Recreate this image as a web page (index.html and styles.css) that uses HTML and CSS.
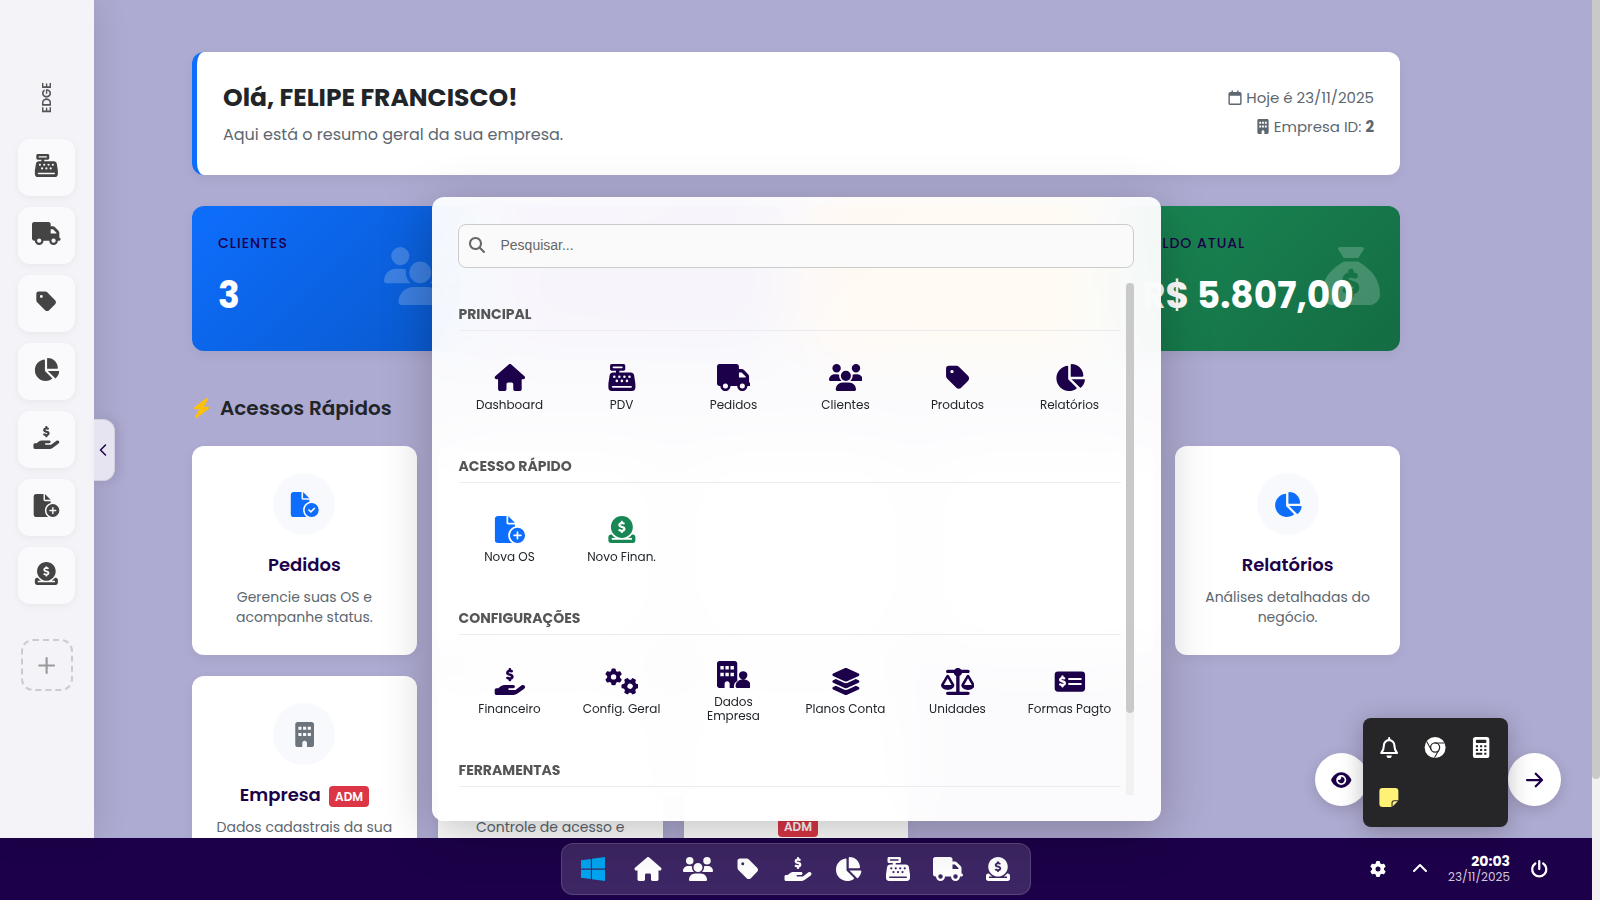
FILE: index.html
```html
<!DOCTYPE html>
<html lang="pt-BR">

<head>
    <meta charset="UTF-8">
    <title>Painel</title>
    <link rel="stylesheet" href="styles.css">
</head>

<body>
    <svg class="sprite" aria-hidden="true">
        <symbol id="i-house" viewBox="0 0 576 512"><path d="M575.8 255.5c0 18-15 32.1-32 32.1h-32l.7 160.2c0 2.7-.2 5.4-.5 8.1V472c0 22.1-17.9 40-40 40H392c-22.1 0-40-17.9-40-40V384c0-17.7-14.3-32-32-32H256c-17.7 0-32 14.3-32 32v88c0 22.1-17.9 40-40 40H104c-22.1 0-40-17.9-40-40V287.6H32c-18 0-32-14-32-32.1c0-9 3-17 10-24L266.4 8c7-7 15-8 22-8s15 2 21 7L564.8 231.5c8 7 12 15 11 24z"/></symbol>
        <symbol id="i-register" viewBox="0 0 512 512"><path d="M64 0C46.3 0 32 14.3 32 32V96c0 17.7 14.3 32 32 32h80v32H87c-31.6 0-58.5 23.1-63.3 54.4L1.1 364.1C.4 368.8 0 373.6 0 378.4V448c0 35.3 28.7 64 64 64H448c35.3 0 64-28.7 64-64V378.4c0-4.8-.4-9.6-1.1-14.4L488.2 214.4C483.5 183.1 456.6 160 425 160H208V128h80c17.7 0 32-14.3 32-32V32c0-17.7-14.3-32-32-32H64zM96 48H256c8.8 0 16 7.2 16 16s-7.2 16-16 16H96c-8.8 0-16-7.2-16-16s7.2-16 16-16zM64 432c0-8.8 7.2-16 16-16H432c8.8 0 16 7.2 16 16s-7.2 16-16 16H80c-8.8 0-16-7.2-16-16zm48-168a24 24 0 1 1 0-48 24 24 0 1 1 0 48zm120-24a24 24 0 1 1 -48 0 24 24 0 1 1 48 0zM160 344a24 24 0 1 1 0-48 24 24 0 1 1 0 48zM328 240a24 24 0 1 1 -48 0 24 24 0 1 1 48 0zM256 344a24 24 0 1 1 0-48 24 24 0 1 1 0 48zM424 240a24 24 0 1 1 -48 0 24 24 0 1 1 48 0zM352 344a24 24 0 1 1 0-48 24 24 0 1 1 0 48z" fill-rule="evenodd"/></symbol>
        <symbol id="i-truck" viewBox="0 0 640 512"><path d="M48 0C21.5 0 0 21.5 0 48V368c0 26.5 21.5 48 48 48H64c0 53 43 96 96 96s96-43 96-96H384c0 53 43 96 96 96s96-43 96-96h32c17.7 0 32-14.3 32-32s-14.3-32-32-32V237.3c0-17-6.7-33.3-18.7-45.3L512 114.7c-12-12-28.3-18.7-45.3-18.7H416V48c0-26.5-21.5-48-48-48H48zM416 160h50.7L544 237.3V256H416V160zM112 416a48 48 0 1 1 96 0 48 48 0 1 1 -96 0zm368-48a48 48 0 1 1 0 96 48 48 0 1 1 0-96z" fill-rule="evenodd"/></symbol>
        <symbol id="i-tag" viewBox="0 0 448 512"><path d="M0 80V229.5c0 17 6.7 33.3 18.7 45.3l176 176c25 25 65.5 25 90.5 0L418.7 317.3c25-25 25-65.5 0-90.5l-176-176c-12-12-28.3-18.7-45.3-18.7H48C21.5 32 0 53.5 0 80zm112 32a32 32 0 1 1 0 64 32 32 0 1 1 0-64z" fill-rule="evenodd"/></symbol>
        <symbol id="i-pie" viewBox="0 0 576 512"><path d="M304 240V16.6c0-9 7-16.6 16-16.6C443.7 0 544 100.3 544 224c0 9-7.6 16-16.6 16H304zM32 272C32 150.7 122.1 50.3 239 34.3c9.2-1.3 17 6.1 17 15.4V288L412.5 444.5c6.7 6.7 6.2 17.7-1.5 23.1C371.8 495.6 323.8 512 272 512C139.5 512 32 404.6 32 272zm526.4 16c9.3 0 16.6 7.8 15.4 17c-7.7 55.9-34.6 105.6-73.9 142.3c-6 5.6-15.4 5.2-21.2-.7L320 288H558.4z"/></symbol>
        <symbol id="i-dollar" viewBox="192 0 192 256"><path d="M312 24V34.5c6.4 1.2 12.6 2.7 18.2 4.2c12.8 3.4 20.4 16.6 17 29.4s-16.6 20.4-29.4 17c-10.9-2.9-21.1-4.9-30.2-5c-7.3-.1-14.7 1.7-19.4 4.4c-2.1 1.3-3.1 2.4-3.5 3c-.3 .5-.7 1.2-.7 2.8c0 .3 0 .5 0 .6c.2 .2 .9 1.2 3.3 2.6c5.8 3.5 14.4 6.2 27.4 10.1l.9 .3c11.1 3.3 25.9 7.8 37.9 15.3c13.7 8.6 26.1 22.9 26.4 44.9c.3 22.5-11.4 38.9-26.7 48.5c-6.7 4.1-13.9 7-21.3 8.8V232c0 13.3-10.7 24-24 24s-24-10.7-24-24V220.6c-9.5-2.3-18.2-5.3-25.6-7.8c-2.1-.7-4.1-1.4-6-2c-12.6-4.2-19.4-17.8-15.2-30.4s17.8-19.4 30.4-15.2c2.6 .9 5 1.7 7.3 2.5c13.6 4.6 23.4 7.9 33.9 8.3c8 .3 15.1-1.6 19.2-4.1c1.9-1.2 2.8-2.2 3.2-2.9c.4-.6 .9-1.8 .8-4.1c0-1 0-2.1-4-4.8c-5.7-3.6-14.3-6.4-27.1-10.3l-1.9-.6c-10.8-3.2-25-7.5-36.4-14.4c-13.5-8.1-26.5-22-26.6-44.1c-.1-22.9 12.9-38.6 27.7-47.4c6.4-3.8 13.3-6.4 20.2-8.2V24c0-13.3 10.7-24 24-24s24 10.7 24 24z"/></symbol>
        <symbol id="i-hand" viewBox="0 0 576 512"><use href="#i-dollar" x="192" y="0" width="192" height="256"/><path d="M559.7 392.2c17.8-13.1 21.6-38.1 8.5-55.9s-38.1-21.6-55.9-8.5L392.6 416H272c-8.8 0-16-7.2-16-16s7.2-16 16-16h80c17.7 0 32-14.3 32-32s-14.3-32-32-32H193.7c-29.1 0-57.3 9.9-80 28L68.8 384H32c-17.7 0-32 14.3-32 32v64c0 17.7 14.3 32 32 32H352.5c29 0 57.3-9.3 80.7-26.5l126.6-93.3z"/></symbol>
        <symbol id="i-file" viewBox="0 0 576 512"><path d="M0 64C0 28.7 28.7 0 64 0H224V128c0 17.7 14.3 32 32 32H384v38.6C310.1 219.5 256 287.4 256 368c0 59.1 29.1 111.3 73.7 143.3c-3.2 .5-6.4 .7-9.7 .7H64c-35.3 0-64-28.7-64-64V64zm384 64H256V0L384 128z"/></symbol>
        <symbol id="i-file-plus" viewBox="0 0 576 512"><use href="#i-file" width="576" height="512"/><path d="M432 224a144 144 0 1 1 0 288 144 144 0 1 1 0-288zm16 80c0-8.8-7.2-16-16-16s-16 7.2-16 16v48H368c-8.8 0-16 7.2-16 16s7.2 16 16 16h48v48c0 8.8 7.2 16 16 16s16-7.2 16-16V384h48c8.8 0 16-7.2 16-16s-7.2-16-16-16H448V304z" fill-rule="evenodd"/></symbol>
        <symbol id="i-file-check" viewBox="0 0 576 512"><use href="#i-file" width="576" height="512"/><path d="M576 368a144 144 0 1 1 -288 0 144 144 0 1 1 288 0zm-76.7-43.3c-6.2-6.2-16.4-6.2-22.6 0L416 385.4l-28.7-28.7c-6.2-6.2-16.4-6.2-22.6 0s-6.2 16.4 0 22.6l40 40c6.2 6.2 16.4 6.2 22.6 0l72-72c6.2-6.2 6.2-16.4 0-22.6z" fill-rule="evenodd"/></symbol>
        <symbol id="i-coin" viewBox="0 0 512 512"><path d="M326.7 403.7c-22.1 8-45.9 12.3-70.7 12.3s-48.7-4.4-70.7-12.3c-30-11-57.6-29-79.4-51.7C70 314.6 48 263.9 48 208C48 93.1 141.1 0 256 0S464 93.1 464 208c0 55.9-22 106.6-57.9 144c-22 22.5-50 41-79.4 51.7zM256 91.9c-11.1 0-20.1 9-20.1 20.1v6c-5.6 1.2-10.9 2.9-15.9 5.1c-15 6.8-27.9 19.4-31.1 37.7c-1.8 10.2-.8 20 3.4 29c4.2 8.8 10.7 15 17.3 19.5c11.6 7.9 26.9 12.5 38.6 16l2.2 .7c13.9 4.2 23.4 7.4 29.3 11.7c2.5 1.8 3.4 3.2 3.7 4c.3 .8 .9 2.6 .2 6.7c-.6 3.5-2.5 6.4-8 8.8c-6.1 2.6-16 3.9-28.8 1.9c-6-1-16.7-4.6-26.2-7.9c-2.2-.7-4.3-1.5-6.4-2.1c-10.5-3.5-21.8 2.2-25.3 12.7s2.2 21.8 12.7 25.3c1.2 .4 2.7 .9 4.4 1.5c7.9 2.7 20.3 6.9 29.8 9.1V304c0 11.1 9 20.1 20.1 20.1s20.1-9 20.1-20.1v-5.5c5.3-1 10.5-2.5 15.4-4.6c15.7-6.7 28.4-19.7 31.6-38.7c1.8-10.4 1-20.3-3-29.4c-3.9-9-10.2-15.6-16.9-20.5c-12.2-8.8-28.3-13.7-40.4-17.4l-.8-.2c-14.2-4.3-23.8-7.3-29.9-11.4c-2.6-1.8-3.4-3-3.6-3.5c-.2-.3-.7-1.6-.1-5c.3-1.9 1.9-5.2 8.2-8.1c6.4-2.9 16.4-4.5 28.6-2.6c4.3 .7 17.9 3.3 21.7 4.3c10.7 2.8 21.6-3.5 24.5-14.2s-3.5-21.6-14.2-24.5c-4.4-1.2-14.4-3.2-21-4.4V112c0-11.1-9-20.1-20.1-20.1zM48 352H64c19.5 25.9 44 47.7 72.2 64H64v32H448V416H375.8c28.2-16.3 52.8-38.1 72.2-64h16c26.5 0 48 21.5 48 48v64c0 26.5-21.5 48-48 48H48c-26.5 0-48-21.5-48-48V400c0-26.5 21.5-48 48-48z" fill-rule="evenodd"/></symbol>
        <symbol id="i-users" viewBox="0 0 640 512"><path d="M144 0a80 80 0 1 1 0 160A80 80 0 1 1 144 0zM512 0a80 80 0 1 1 0 160A80 80 0 1 1 512 0zM0 298.7C0 239.8 47.8 192 106.7 192h42.7c15.9 0 31 3.5 44.6 9.7c-1.3 7.2-1.9 14.7-1.9 22.3c0 38.2 16.8 72.5 43.3 96H21.3C9.6 320 0 310.4 0 298.7zM404.6 320c26.6-23.5 43.3-57.8 43.3-96c0-7.6-.7-15-1.9-22.3c13.6-6.3 28.7-9.7 44.6-9.7h42.7C592.2 192 640 239.8 640 298.7c0 11.8-9.6 21.3-21.3 21.3H404.6zM224 224a96 96 0 1 1 192 0 96 96 0 1 1 -192 0zM128 485.3C128 411.7 187.7 352 261.3 352H378.7C452.3 352 512 411.7 512 485.3c0 14.7-11.9 26.7-26.7 26.7H154.7c-14.7 0-26.7-11.9-26.7-26.7z"/></symbol>
        <symbol id="i-building" viewBox="0 0 384 512"><path d="M48 0C21.5 0 0 21.5 0 48V464c0 26.5 21.5 48 48 48h96V432c0-26.5 21.5-48 48-48s48 21.5 48 48v80h96c26.5 0 48-21.5 48-48V48c0-26.5-21.5-48-48-48H48zM64 96h64v64H64zM160 96h64v64h-64zM256 96h64v64h-64zM64 224h64v64H64zM160 224h64v64h-64zM256 224h64v64h-64z" fill-rule="evenodd"/></symbol>
        <symbol id="i-building-user" viewBox="0 0 640 512"><path d="M48 0C21.5 0 0 21.5 0 48V464c0 26.5 21.5 48 48 48h96V432c0-26.5 21.5-48 48-48s48 21.5 48 48v80h85c-5-10-5-24-5-35c0-40 25-76 64-99V48c0-26.5-21.5-48-48-48H48zM64 96h64v64H64zM160 96h64v64h-64zM256 96h64v64h-64zM64 224h64v64H64zM160 224h64v64h-64zM256 224h64v64h-64z" fill-rule="evenodd"/><path d="M576 272a80 80 0 1 1-160 0 80 80 0 1 1 160 0zM352 477.1c0-69.1 56-125.1 125.1-125.1h37.8C584 352 640 408 640 477.1c0 19.3-15.6 34.9-34.9 34.9H386.9c-19.3 0-34.9-15.6-34.9-34.9z"/></symbol>
        <symbol id="i-layers" viewBox="0 0 576 512"><path d="M264.5 5.2c14.9-6.9 32.1-6.9 47 0l218.6 101c8.5 3.9 13.9 12.4 13.9 21.8s-5.4 17.9-13.9 21.8l-218.6 101c-14.9 6.9-32.1 6.9-47 0L45.9 149.8C37.4 145.8 32 137.3 32 128s5.4-17.9 13.9-21.8L264.5 5.2zM476.9 209.6l53.2 24.6c8.5 3.9 13.9 12.4 13.9 21.8s-5.4 17.9-13.9 21.8l-218.6 101c-14.9 6.9-32.1 6.9-47 0L45.9 277.8C37.4 273.8 32 265.3 32 256s5.4-17.9 13.9-21.8l53.2-24.6 152 70.2c23.4 10.8 50.4 10.8 73.8 0l152-70.2zm-152 198.2l152-70.2 53.2 24.6c8.5 3.9 13.9 12.4 13.9 21.8s-5.4 17.9-13.9 21.8l-218.6 101c-14.9 6.9-32.1 6.9-47 0L45.9 405.8C37.4 401.8 32 393.3 32 384s5.4-17.9 13.9-21.8l53.2-24.6 152 70.2c23.4 10.8 50.4 10.8 73.8 0z"/></symbol>
        <symbol id="i-scale" viewBox="0 0 640 512"><path d="M384 32H512c17.7 0 32 14.3 32 32s-14.3 32-32 32H398.4c-5.2 25.8-22.9 47.1-46.4 57.3V448H512c17.7 0 32 14.3 32 32s-14.3 32-32 32H128c-17.7 0-32-14.3-32-32s14.3-32 32-32H288V153.3c-23.5-10.3-41.2-31.6-46.4-57.3H128c-17.7 0-32-14.3-32-32s14.3-32 32-32H256c14.6-19.4 37.8-32 64-32s49.4 12.6 64 32zm55.6 288H584.4L512 195.8 439.6 320zM512 416c-62.9 0-115.2-34-126-78.9c-2.6-11 1-22.3 6.7-32.1l95.2-163.2c5-8.6 14.2-13.8 24.1-13.8s19.1 5.3 24.1 13.8l95.2 163.2c5.7 9.8 9.3 21.1 6.7 32.1C627.2 382 574.9 416 512 416zM126.8 195.8L54.4 320H199.3L126.8 195.8zM.9 337.1c-2.6-11 1-22.3 6.7-32.1l95.2-163.2c5-8.6 14.2-13.8 24.1-13.8s19.1 5.3 24.1 13.8l95.2 163.2c5.7 9.8 9.3 21.1 6.7 32.1C242 382 189.7 416 126.8 416S11.7 382 .9 337.1z" fill-rule="evenodd"/></symbol>
        <symbol id="i-check" viewBox="0 0 576 512"><rect y="64" width="576" height="384" rx="64"/><path d="M272 208h224M272 304h224" fill="none" stroke="#fdfdff" stroke-width="36" stroke-linecap="round"/><use class="knockout" href="#i-dollar" x="60" y="138" width="176" height="236"/></symbol>
        <symbol id="i-gear" viewBox="0 0 512 512"><path d="M495.9 166.6c3.2 8.7 .5 18.4-6.4 24.6l-43.3 39.4c1.1 8.3 1.7 16.8 1.7 25.4s-.6 17.1-1.7 25.4l43.3 39.4c6.9 6.2 9.6 15.9 6.4 24.6c-4.4 11.9-9.7 23.3-15.8 34.3l-4.7 8.1c-6.6 11-14 21.4-22.1 31.2c-5.9 7.2-15.7 9.6-24.5 6.8l-55.7-17.7c-13.4 10.3-28.2 18.9-44 25.4l-12.5 57.1c-2 9.1-9 16.3-18.2 17.8c-13.8 2.3-28 3.5-42.5 3.5s-28.7-1.2-42.5-3.5c-9.2-1.5-16.2-8.7-18.2-17.8l-12.5-57.1c-15.8-6.5-30.6-15.1-44-25.4L83.1 425.9c-8.8 2.8-18.6 .3-24.5-6.8c-8.1-9.8-15.5-20.2-22.1-31.2l-4.7-8.1c-6.1-11-11.4-22.4-15.8-34.3c-3.2-8.7-.5-18.4 6.4-24.6l43.3-39.4C64.6 273.1 64 264.6 64 256s.6-17.1 1.7-25.4L22.4 191.2c-6.9-6.2-9.6-15.9-6.4-24.6c4.4-11.9 9.7-23.3 15.8-34.3l4.7-8.1c6.6-11 14-21.4 22.1-31.2c5.9-7.2 15.7-9.6 24.5-6.8l55.7 17.7c13.4-10.3 28.2-18.9 44-25.4l12.5-57.1c2-9.1 9-16.3 18.2-17.8C227.3 1.2 241.5 0 256 0s28.7 1.2 42.5 3.5c9.2 1.5 16.2 8.7 18.2 17.8l12.5 57.1c15.8 6.5 30.6 15.1 44 25.4l55.7-17.7c8.8-2.8 18.6-.3 24.5 6.8c8.1 9.8 15.5 20.2 22.1 31.2l4.7 8.1c6.1 11 11.4 22.4 15.8 34.3zM256 336a80 80 0 1 0 0-160 80 80 0 1 0 0 160z"/></symbol>
        <symbol id="i-gears" viewBox="0 0 640 512"><use href="#i-gear" width="325" height="325" y="6"/><g transform="rotate(30 476 346)"><use href="#i-gear" x="312" y="182" width="328" height="328"/></g></symbol>
        <symbol id="i-sack" viewBox="0 0 512 512"><mask id="m-sack"><rect width="512" height="512" fill="#fff"/><use class="mask-cut" href="#i-dollar" x="158" y="190" width="196" height="262"/></mask><path mask="url(#m-sack)" d="M320 96H192L144.6 24.9C137.5 14.2 145.1 0 157.9 0H354.1c12.8 0 20.4 14.2 13.3 24.9L320 96zM192 128H320c3.8 2.5 8.1 5.3 13 8.4C389.7 172.7 512 250.9 512 416c0 53-43 96-96 96H96c-53 0-96-43-96-96C0 250.9 122.3 172.7 179 136.4c4.8-3.1 9.2-5.9 13-8.4z"/></symbol>
        <symbol id="i-bolt" viewBox="-16 0 448 512"><path transform="translate(44) skewX(-10)" d="M349.4 44.6c5.9-13.7 1.5-29.7-10.6-38.5s-28.6-8-39.9 1.8l-256 224c-10 8.8-13.6 22.9-8.9 35.3S50.7 288 64 288H175.5L98.6 467.4c-5.9 13.7-1.5 29.7 10.6 38.5s28.6 8 39.9-1.8l256-224c10-8.8 13.6-22.9 8.9-35.3s-16.6-20.7-30-20.7H272.5L349.4 44.6z"/></symbol>
        <symbol id="i-search" viewBox="0 0 512 512"><path d="M416 208c0 45.9-14.9 88.3-40 122.7L502.6 457.4c12.5 12.5 12.5 32.8 0 45.3s-32.8 12.5-45.3 0L330.7 376c-34.4 25.2-76.8 40-122.7 40C93.1 416 0 322.9 0 208S93.1 0 208 0S416 93.1 416 208zM208 352a144 144 0 1 0 0-288 144 144 0 1 0 0 288z"/></symbol>
        <symbol id="i-eye" viewBox="0 0 576 512"><path d="M288 32c-80.8 0-145.5 36.8-192.6 80.6C48.6 156 17.3 208 2.5 243.7c-3.3 7.9-3.3 16.7 0 24.6C17.3 304 48.6 356 95.4 399.4C142.5 443.2 207.2 480 288 480s145.5-36.8 192.6-80.6c46.8-43.5 78.1-95.4 93-131.1c3.3-7.9 3.3-16.7 0-24.6c-14.9-35.7-46.2-87.7-93-131.1C433.5 68.8 368.8 32 288 32zM144 256a144 144 0 1 1 288 0 144 144 0 1 1 -288 0zm144-64c0 35.3-28.7 64-64 64c-7.1 0-13.9-1.2-20.3-3.3c-5.5-1.8-11.9 1.6-11.7 7.4c.3 6.9 1.3 13.8 3.2 20.7c13.7 51.2 66.4 81.6 117.6 67.9s81.6-66.4 67.9-117.6c-11.1-41.5-47.8-69.4-88.6-71.1c-5.8-.2-9.2 6.1-7.4 11.7c2.1 6.4 3.3 13.2 3.3 20.3z" fill-rule="evenodd"/></symbol>
        <symbol id="i-arrow" viewBox="0 0 20 16"><path d="M4 8h12M11 3l5 5-5 5" fill="none" stroke="currentColor" stroke-width="1.8" stroke-linecap="round" stroke-linejoin="round"/></symbol>
        <symbol id="i-calendar" viewBox="0 0 14 16"><path d="M4 1v3M10 1v3" fill="none" stroke="currentColor" stroke-width="1.5" stroke-linecap="round"/><path d="M2 2h10a2 2 0 0 1 2 2v10a2 2 0 0 1-2 2H2a2 2 0 0 1-2-2V4a2 2 0 0 1 2-2zM1.5 6v7.5a1 1 0 0 0 1 1h9a1 1 0 0 0 1-1V6z" fill-rule="evenodd"/></symbol>
        <symbol id="i-bell" viewBox="0 0 18 20"><path d="M9 1v1.5M1.5 15.2c1.7-2 2.5-3.5 2.5-7.2a5 5 0 0 1 10 0c0 3.7.8 5.2 2.5 7.2z" fill="none" stroke="currentColor" stroke-width="2" stroke-linecap="round" stroke-linejoin="round"/><path d="M6.5 17.5h5a2.5 2.5 0 0 1-5 0z"/></symbol>
        <symbol id="i-chrome" viewBox="0 0 20 20"><circle cx="10" cy="10" r="10"/><circle cx="10" cy="10" r="4.3" fill="#fff" stroke="#262628" stroke-width="1.2"/><path d="M10 5.7h9M6.3 12.2L2 4.4M13.7 12.2L9.4 19.8" fill="none" stroke="#262628" stroke-width="1"/></symbol>
        <symbol id="i-calc" viewBox="0 0 400 512"><path d="M64 0h272a64 64 0 0 1 64 64v384a64 64 0 0 1-64 64H64a64 64 0 0 1-64-64V64A64 64 0 0 1 64 0zM96 64a24 24 0 0 0-24 24v32a24 24 0 0 0 24 24h208a24 24 0 0 0 24-24V88a24 24 0 0 0-24-24zM72 200h52v48H72zM174 200h52v48h-52zM276 200h52v48h-52zM72 292h52v48H72zM174 292h52v48h-52zM276 292h52v48h-52zM72 384h154v48H72zM276 384h52v48h-52z" fill-rule="evenodd"/></symbol>
        <symbol id="i-note" viewBox="0 0 18 18"><path d="M3 0h12a3 3 0 0 1 3 3v8.5h-4a2.5 2.5 0 0 0-2.5 2.5v4H3a3 3 0 0 1-3-3V3a3 3 0 0 1 3-3zM12.5 17.5V14a1.5 1.5 0 0 1 1.5-1.5h3.5z"/></symbol>
        <symbol id="i-windows" viewBox="0 32 448 448"><path d="M0 93.7l183.6-25.3v177.4H0V93.7zm0 324.6l183.6 25.3V268.4H0v149.9zm203.8 28L448 480V268.4H203.8v177.9zm0-380.6v180.1H448V32L203.8 65.7z"/></symbol>
        <symbol id="i-left" viewBox="0 0 10 16"><path d="M7.5 3L2.5 8l5 5" fill="none" stroke="currentColor" stroke-width="1.5" stroke-linecap="round" stroke-linejoin="round"/></symbol>
        <symbol id="i-up" viewBox="0 0 16 16"><path d="M2 10l6-6 6 6" fill="none" stroke="currentColor" stroke-width="2" stroke-linecap="round" stroke-linejoin="round"/></symbol>
        <symbol id="i-plus" viewBox="0 0 16 16"><path d="M8 1v14M1 8h14" fill="none" stroke="currentColor" stroke-width="2" stroke-linecap="round"/></symbol>
        <symbol id="i-power" viewBox="0 0 16 16"><path d="M8 1v7M4.5 3.1a6.3 6.3 0 1 0 7 0" fill="none" stroke="currentColor" stroke-width="2" stroke-linecap="round"/></symbol>
    </svg>

    <div class="desktop">
        <div class="workspace">
            <aside class="edge-bar">
                <span class="edge-title">EDGE</span>
                <nav class="edge-list">
                    <button class="edge-button" aria-label="PDV"><svg class="icon"><use href="#i-register"/></svg></button>
                    <button class="edge-button" aria-label="Pedidos"><svg class="icon"><use href="#i-truck"/></svg></button>
                    <button class="edge-button" aria-label="Produtos"><svg class="icon"><use href="#i-tag"/></svg></button>
                    <button class="edge-button" aria-label="Relatórios"><svg class="icon"><use href="#i-pie"/></svg></button>
                    <button class="edge-button" aria-label="Financeiro"><svg class="icon"><use href="#i-hand"/></svg></button>
                    <button class="edge-button" aria-label="Nova OS"><svg class="icon"><use href="#i-file-plus"/></svg></button>
                    <button class="edge-button" aria-label="Novo Finan."><svg class="icon"><use href="#i-coin"/></svg></button>
                </nav>
                <button class="edge-add" aria-label="Adicionar"><svg class="icon"><use href="#i-plus"/></svg></button>
                <button class="edge-toggle" aria-label="Recolher"><svg class="icon"><use href="#i-left"/></svg></button>
            </aside>

            <main class="content">
                <section class="welcome">
                    <div>
                        <h1>Olá, FELIPE FRANCISCO!</h1>
                        <p>Aqui está o resumo geral da sua empresa.</p>
                    </div>
                    <div class="welcome-info">
                        <div><svg class="icon icon-narrow"><use href="#i-calendar"/></svg>Hoje é 23/11/2025</div>
                        <div><svg class="icon icon-narrow"><use href="#i-building"/></svg>Empresa ID: <b>2</b></div>
                    </div>
                </section>

                <section class="stats">
                    <div class="stat stat-blue">
                        <div class="stat-label">CLIENTES</div>
                        <div class="stat-value">3</div>
                        <svg class="icon stat-icon"><use href="#i-users"/></svg>
                    </div>
                    <div class="stat stat-purple"></div>
                    <div class="stat stat-orange"></div>
                    <div class="stat stat-green">
                        <div class="stat-label">SALDO ATUAL</div>
                        <div class="stat-value">R$ 5.807,00</div>
                        <svg class="icon icon-square stat-icon"><use href="#i-sack"/></svg>
                    </div>
                </section>

                <h2 class="section-title"><svg class="icon icon-narrow bolt"><use href="#i-bolt"/></svg>Acessos Rápidos</h2>

                <section class="cards">
                    <a href="#" class="card">
                        <span class="card-icon blue"><svg class="icon"><use href="#i-file-check"/></svg></span>
                        <h3>Pedidos</h3>
                        <p>Gerencie suas OS e acompanhe status.</p>
                    </a>
                    <a href="#" class="card"></a>
                    <a href="#" class="card"></a>
                    <a href="#" class="card"></a>
                    <a href="#" class="card">
                        <span class="card-icon blue"><svg class="icon"><use href="#i-pie"/></svg></span>
                        <h3>Relatórios</h3>
                        <p>Análises detalhadas do negócio.</p>
                    </a>
                    <a href="#" class="card">
                        <span class="card-icon gray"><svg class="icon"><use href="#i-building"/></svg></span>
                        <h3>Empresa <span class="badge">ADM</span></h3>
                        <p>Dados cadastrais da sua</p>
                    </a>
                    <a href="#" class="card">
                        <span class="card-icon"></span>
                        <h3>&nbsp;</h3>
                        <p>Controle de acesso e</p>
                    </a>
                    <a href="#" class="card">
                        <span class="card-icon"></span>
                        <h3>&nbsp;<br><span class="badge">ADM</span></h3>
                    </a>
                </section>
            </main>
        </div>

        <footer class="taskbar">
            <nav class="dock">
                <button class="start" aria-label="Iniciar"><svg class="icon"><use href="#i-windows"/></svg></button>
                <button aria-label="Dashboard"><svg class="icon"><use href="#i-house"/></svg></button>
                <button aria-label="Clientes"><svg class="icon"><use href="#i-users"/></svg></button>
                <button aria-label="Produtos"><svg class="icon"><use href="#i-tag"/></svg></button>
                <button aria-label="Financeiro"><svg class="icon"><use href="#i-hand"/></svg></button>
                <button aria-label="Relatórios"><svg class="icon"><use href="#i-pie"/></svg></button>
                <button aria-label="PDV"><svg class="icon"><use href="#i-register"/></svg></button>
                <button aria-label="Pedidos"><svg class="icon"><use href="#i-truck"/></svg></button>
                <button aria-label="Novo Finan."><svg class="icon"><use href="#i-coin"/></svg></button>
            </nav>
            <div class="tray">
                <button aria-label="Configurações"><svg class="icon"><use href="#i-gear"/></svg></button>
                <button aria-label="Ícones ocultos"><svg class="icon"><use href="#i-up"/></svg></button>
                <div class="clock"><b>20:03</b><span>23/11/2025</span></div>
                <button aria-label="Sair"><svg class="icon power"><use href="#i-power"/></svg></button>
            </div>
        </footer>

        <button class="fab fab-view" aria-label="Visualizar"><svg class="icon"><use href="#i-eye"/></svg></button>
        <button class="fab fab-next" aria-label="Avançar"><svg class="icon"><use href="#i-arrow"/></svg></button>

        <div class="tray-popup">
            <button aria-label="Notificações"><svg class="icon"><use href="#i-bell"/></svg></button>
            <button aria-label="Navegador"><svg class="icon"><use href="#i-chrome"/></svg></button>
            <button aria-label="Calculadora"><svg class="icon"><use href="#i-calc"/></svg></button>
            <button class="note" aria-label="Notas"><svg class="icon"><use href="#i-note"/></svg></button>
        </div>

        <div class="start-menu">
            <label class="search">
                <svg class="icon icon-square"><use href="#i-search"/></svg>
                <input type="text" placeholder="Pesquisar..." aria-label="Pesquisar">
            </label>
            <div class="menu-body">
                <div class="menu-list">
                    <section class="menu-section">
                        <h4>PRINCIPAL</h4>
                        <div class="menu-grid">
                            <a href="#"><svg class="icon"><use href="#i-house"/></svg>Dashboard</a>
                            <a href="#"><svg class="icon"><use href="#i-register"/></svg>PDV</a>
                            <a href="#"><svg class="icon"><use href="#i-truck"/></svg>Pedidos</a>
                            <a href="#"><svg class="icon"><use href="#i-users"/></svg>Clientes</a>
                            <a href="#"><svg class="icon"><use href="#i-tag"/></svg>Produtos</a>
                            <a href="#"><svg class="icon"><use href="#i-pie"/></svg>Relatórios</a>
                        </div>
                    </section>
                    <section class="menu-section">
                        <h4>ACESSO RÁPIDO</h4>
                        <div class="menu-grid">
                            <a href="#"><svg class="icon blue"><use href="#i-file-plus"/></svg>Nova OS</a>
                            <a href="#"><svg class="icon green"><use href="#i-coin"/></svg>Novo Finan.</a>
                        </div>
                    </section>
                    <section class="menu-section">
                        <h4>CONFIGURAÇÕES</h4>
                        <div class="menu-grid">
                            <a href="#"><svg class="icon"><use href="#i-hand"/></svg>Financeiro</a>
                            <a href="#"><svg class="icon"><use href="#i-gears"/></svg>Config. Geral</a>
                            <a href="#"><svg class="icon"><use href="#i-building-user"/></svg>Dados<br>Empresa</a>
                            <a href="#"><svg class="icon"><use href="#i-layers"/></svg>Planos Conta</a>
                            <a href="#"><svg class="icon"><use href="#i-scale"/></svg>Unidades</a>
                            <a href="#"><svg class="icon"><use href="#i-check"/></svg>Formas Pagto</a>
                        </div>
                    </section>
                    <section class="menu-section">
                        <h4>FERRAMENTAS</h4>
                    </section>
                </div>
                <div class="scrollbar"><div class="scroll-thumb menu-thumb"></div></div>
            </div>
        </div>
    </div>
    <div class="scrollbar"><div class="scroll-thumb page-thumb"></div></div>
</body>

</html>
```
FILE: styles.css
```css
:root {
    --navy: #1c0049;
    --blue: #0d6efd;
    --green: #198754;
    --red: #dc3545;
    --lilac: #aeabd2;
    --gray: #5c6770;
    --radius: 12px;
}

* {
    margin: 0;
    padding: 0;
    box-sizing: border-box;
}

body {
    display: flex;
    height: 100vh;
    overflow: hidden;
    background: var(--lilac);
    color: #212529;
    font-family: Poppins, Inter, sans-serif;
}

a {
    color: inherit;
    text-decoration: none;
}

button {
    display: flex;
    align-items: center;
    justify-content: center;
    border: none;
    background: none;
    color: inherit;
    cursor: pointer;
}

.sprite {
    position: absolute;
    width: 0;
    height: 0;
}

.icon {
    display: block;
    flex-shrink: 0;
    width: 1.25em;
    height: 1em;
    fill: currentColor;
}

.icon-narrow {
    width: 14px;
}

.icon-square {
    width: 1em;
}

.knockout {
    fill: #fdfdff;
}

.mask-cut {
    fill: #000;
}

.blue {
    color: var(--blue);
}

.green {
    color: var(--green);
}

.gray {
    color: #6c757d;
}

.desktop {
    position: relative;
    flex: 1;
    min-width: 0;
    display: flex;
    flex-direction: column;
}

.workspace {
    flex: 1;
    min-height: 0;
    display: flex;
}

/* page and menu scrollbars */
.scrollbar {
    width: 8px;
    flex-shrink: 0;
    background: #f1f1f1;
}

.scroll-thumb {
    background: #c9c9c9;
    border-radius: 4px;
}

.page-thumb {
    height: 86.5%;
    border-radius: 0 0 4px 4px;
}

.menu-thumb {
    height: 84%;
}

/* left edge bar */
.edge-bar {
    position: relative;
    z-index: 1;
    width: 94px;
    flex-shrink: 0;
    display: flex;
    flex-direction: column;
    align-items: center;
    padding: 83px 1px 0 0;
    background: #f4f3f8;
    box-shadow: 4px 0 30px rgba(0, 0, 0, 0.1);
    color: #444;
}

.edge-title {
    height: 30px;
    margin-bottom: 26px;
    writing-mode: vertical-rl;
    transform: rotate(180deg);
    font-size: 12px;
    font-weight: 600;
    color: #555;
}

.edge-list {
    display: flex;
    flex-direction: column;
    gap: 11px;
}

.edge-button {
    width: 57px;
    height: 57px;
    padding-bottom: 4px;
    border-radius: var(--radius);
    background: #fafafc;
    box-shadow: 0 2px 8px rgba(0, 0, 0, 0.05);
    font-size: 23px;
}

.edge-add {
    width: 52px;
    height: 52px;
    margin-top: 35px;
    border: 2px dashed #ccc;
    border-radius: var(--radius);
    color: #999;
    font-size: 17px;
}

.edge-toggle {
    position: absolute;
    top: 50%;
    left: 100%;
    width: 21px;
    height: 62px;
    padding-right: 2px;
    border: 1px solid #d3d1e0;
    border-left: none;
    border-radius: 0 var(--radius) var(--radius) 0;
    background: #e6e4f0;
    box-shadow: 4px 0 12px rgba(0, 0, 0, 0.1);
    color: var(--navy);
    font-size: 16px;
}

/* dashboard */
.content {
    flex: 1;
    min-width: 0;
    padding: 52px 192px 0 98px;
    overflow: hidden;
}

.welcome {
    display: flex;
    justify-content: space-between;
    align-items: center;
    height: 123px;
    margin-bottom: 31px;
    padding: 2px 26px 0;
    background: #fff;
    border-left: 5px solid var(--blue);
    border-radius: var(--radius);
    box-shadow: 0 4px 12px rgba(0, 0, 0, 0.05);
}

.welcome h1 {
    margin-bottom: 9px;
    font-size: 25px;
    line-height: 32px;
    font-weight: 700;
}

.welcome p {
    font-size: 16px;
    line-height: 24px;
    color: var(--gray);
}

.welcome-info {
    margin-bottom: 6px;
    font-size: 15px;
    line-height: 29px;
    color: var(--gray);
}

.welcome-info div {
    display: flex;
    align-items: center;
    justify-content: flex-end;
    gap: 4px;
    white-space: nowrap;
}

.stats {
    display: grid;
    grid-template-columns: repeat(4, 1fr);
    gap: 24px;
    margin-bottom: 40px;
}

.stat {
    position: relative;
    height: 145px;
    padding: 26px;
    border-radius: var(--radius);
    box-shadow: 0 4px 12px rgba(0, 0, 0, 0.05);
    color: #fff;
}

.stat-blue {
    background: linear-gradient(135deg, #0d6efd, #0a58ca);
}

.stat-purple {
    background: linear-gradient(135deg, #6f42c1, #59359a);
}

.stat-orange {
    background: linear-gradient(135deg, #fd7e14, #ffc107);
}

.stat-green {
    background: linear-gradient(135deg, #198754, #146c43);
}

.stat-label {
    margin-bottom: 17px;
    font-size: 14px;
    line-height: 22px;
    font-weight: 500;
    letter-spacing: 1px;
    color: var(--navy);
}

.stat-value {
    font-size: 36px;
    line-height: 50px;
    font-weight: 700;
    white-space: nowrap;
}

.stat-icon {
    position: absolute;
    top: 41px;
    right: 20px;
    font-size: 58px;
    opacity: 0.2;
}

.section-title {
    display: flex;
    align-items: center;
    gap: 10px;
    margin-bottom: 21px;
    font-size: 20px;
    line-height: 34px;
    font-weight: 600;
}

.section-title .bolt {
    width: 18px;
    color: #ffc107;
}

.cards {
    display: grid;
    grid-template-columns: repeat(5, 1fr);
    gap: 21px;
}

.card {
    min-height: 209px;
    padding: 27px 20px;
    background: #fff;
    border-radius: var(--radius);
    box-shadow: 0 4px 12px rgba(0, 0, 0, 0.05);
    text-align: center;
}

.card-icon {
    display: flex;
    align-items: center;
    justify-content: center;
    width: 62px;
    height: 62px;
    margin: 0 auto 15px;
    border-radius: 50%;
    background: #f8f9fc;
    font-size: 25px;
}

.card h3 {
    margin-bottom: 7px;
    font-size: 18px;
    line-height: 30px;
    font-weight: 600;
    color: var(--navy);
}

.card p {
    font-size: 14px;
    line-height: 20px;
    color: var(--gray);
}

.badge {
    display: inline-block;
    margin-left: 4px;
    padding: 0 6px;
    border-radius: 4px;
    background: var(--red);
    color: #fff;
    font-size: 12px;
    line-height: 21px;
    font-weight: 600;
    vertical-align: middle;
}

/* taskbar */
.taskbar {
    height: 62px;
    flex-shrink: 0;
    display: grid;
    grid-template-columns: 1fr auto 1fr;
    align-items: center;
    background: var(--navy);
    color: #fff;
}

.dock {
    grid-column: 2;
    display: flex;
    align-items: center;
    gap: 10px;
    height: 52px;
    padding: 0 12px 0 11px;
    border: 1px solid rgba(255, 255, 255, 0.15);
    border-radius: var(--radius);
    background: rgba(255, 255, 255, 0.15);
}

.dock button {
    width: 40px;
    height: 40px;
    font-size: 24px;
}

.dock .start {
    margin-right: 5px;
    color: #00a4ef;
}

.tray {
    display: flex;
    align-items: center;
    justify-content: flex-end;
    gap: 10px;
    padding-right: 37px;
}

.tray button {
    width: 32px;
    height: 32px;
    font-size: 16px;
}

.tray .power {
    font-size: 18px;
}

.clock {
    display: flex;
    flex-direction: column;
    margin: 0 3px 0 2px;
    text-align: right;
    line-height: 15px;
}

.clock b {
    font-size: 14px;
    font-weight: 700;
}

.clock span {
    font-size: 12px;
    color: #cfc8dc;
}

/* floating buttons */
.fab {
    position: absolute;
    bottom: 94px;
    width: 53px;
    height: 53px;
    border-radius: 50%;
    background: #fff;
    box-shadow: 0 4px 14px rgba(0, 0, 0, 0.15);
    color: var(--navy);
    font-size: 18px;
}

.fab-view {
    right: 224px;
}

.fab-next {
    right: 31px;
    font-size: 20px;
}

.tray-popup {
    position: absolute;
    right: 84px;
    bottom: 73px;
    display: grid;
    grid-template-columns: repeat(3, 36px);
    gap: 14px 10px;
    padding: 11px 9px 12px 8px;
    border-radius: 8px;
    background: #262628;
    box-shadow: 0 4px 24px rgba(0, 0, 0, 0.25);
    color: #fff;
}

.tray-popup button {
    height: 36px;
    font-size: 21px;
}

.tray-popup .note {
    color: #fff176;
    font-size: 19px;
}

/* start menu */
.start-menu {
    position: absolute;
    z-index: 2;
    left: 0;
    right: 0;
    bottom: 79px;
    margin: 0 auto;
    width: 729px;
    height: 624px;
    display: flex;
    flex-direction: column;
    gap: 15px;
    padding: 27px 27px 26px 26px;
    border-radius: var(--radius);
    background: rgba(255, 255, 255, 0.95);
    backdrop-filter: blur(30px);
    box-shadow: 0 10px 50px rgba(0, 0, 0, 0.25);
}

.search {
    display: flex;
    align-items: center;
    gap: 16px;
    height: 44px;
    padding: 0 0 2px 10px;
    border: 1px solid #ccc;
    border-radius: 8px;
    background: #fafafa;
    color: #666;
}

.search input {
    flex: 1;
    border: none;
    outline: none;
    background: none;
    font-family: "Liberation Sans", Arial, sans-serif;
    font-size: 14px;
}

.search input::placeholder {
    color: #666;
}

.menu-body {
    flex: 1;
    min-height: 0;
    display: flex;
    gap: 5px;
}

.menu-list {
    flex: 1;
    padding: 21px 0 0 1px;
    overflow: hidden;
}

.menu-section {
    margin-bottom: 26px;
}

.menu-section h4 {
    margin-bottom: 15px;
    padding-bottom: 6px;
    border-bottom: 1px solid #ececf0;
    font-size: 14px;
    line-height: 20px;
    font-weight: 700;
    color: #555;
}

.menu-grid {
    display: grid;
    grid-template-columns: repeat(6, 1fr);
    gap: 10px;
}

.menu-grid a {
    display: flex;
    flex-direction: column;
    align-items: center;
    justify-content: center;
    height: 84px;
    font-size: 12px;
    line-height: 14px;
    text-align: center;
    white-space: nowrap;
}

.menu-grid .icon {
    margin-bottom: 7px;
    font-size: 27px;
}

.menu-grid .icon:not(.blue):not(.green) {
    color: var(--navy);
}
```
